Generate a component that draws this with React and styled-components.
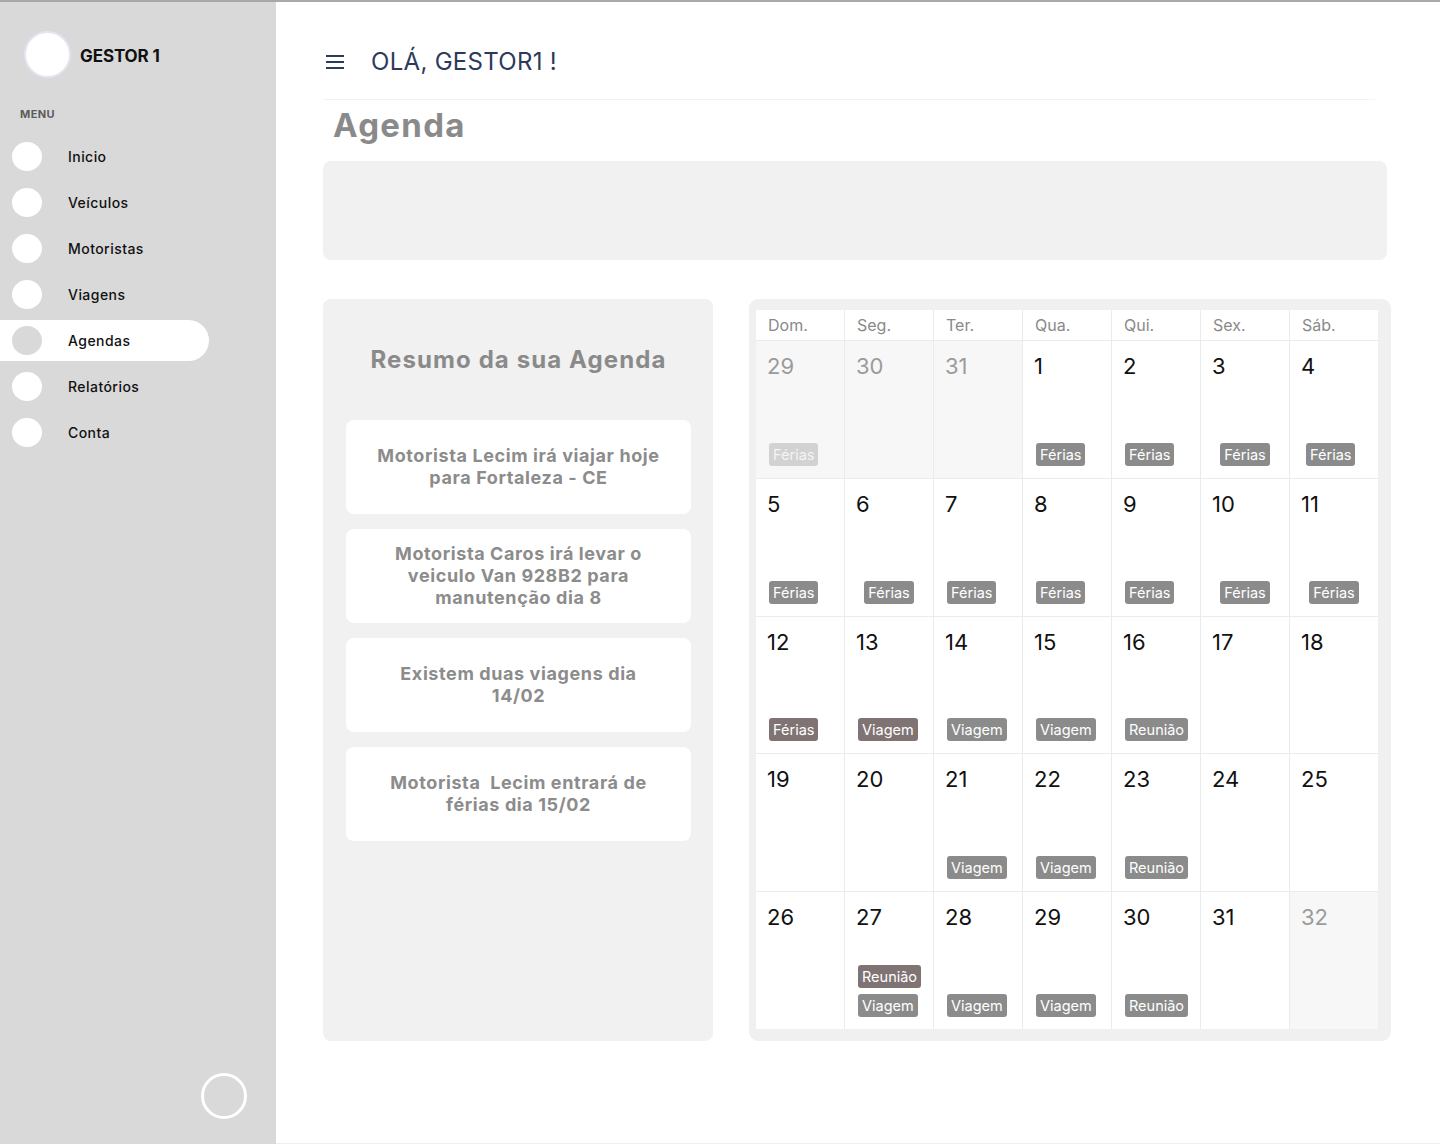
import React from "react";
import styled, { createGlobalStyle } from "styled-components";

const Global = createGlobalStyle`
  html, body { margin: 0; padding: 0; background: #ffffff; }
  body { font-family: "Inter", "Liberation Sans", sans-serif; }
  * { box-sizing: border-box; }
`;

const Page = styled.div`
  display: flex;
  width: 1440px;
  height: 1144px;
  border-top: 2px solid #a9a9a9;
  overflow: hidden;
`;

/* ---------- Sidebar ---------- */
const Sidebar = styled.aside`
  width: 276px;
  flex-shrink: 0;
  background: #d9d9d9;
  display: flex;
  flex-direction: column;
  padding-bottom: 25px;
`;

const Profile = styled.div`
  display: flex;
  align-items: center;
  gap: 9px;
  margin: 29px 0 0 24px;
`;

const Avatar = styled.div`
  width: 47px;
  height: 47px;
  border-radius: 50%;
  background: #ffffff;
  border: 2px solid #e6e4f3;
`;

const ProfileName = styled.span`
  padding-top: 3px;
  font-family: "Inter", sans-serif;
  font-weight: 700;
  font-size: 17px;
  color: #111111;
  letter-spacing: -0.1px;
`;

const MenuLabel = styled.div`
  margin: 29px 0 0 20px;
  font-size: 11px;
  line-height: 14px;
  font-weight: 700;
  color: #5c5c5c;
  letter-spacing: 0.4px;
`;

const Nav = styled.nav`
  display: flex;
  flex-direction: column;
  gap: 5px;
  margin-top: 15px;
`;

const NavItem = styled.div`
  width: 209px;
  height: 41px;
  display: flex;
  align-items: center;
  gap: 26px;
  padding-left: 12px;
  border-radius: 0 21px 21px 0;
  background: ${(p) => (p.$active ? "#ffffff" : "transparent")};
`;

const NavDot = styled.span`
  width: 30px;
  height: 29px;
  border-radius: 50%;
  background: ${(p) => (p.$active ? "#d9d9d9" : "#ffffff")};
`;

const NavText = styled.span`
  font-size: 14px;
  font-weight: 500;
  color: #111111;
  letter-spacing: 0.45px;
`;

const Ring = styled.div`
  margin-top: auto;
  align-self: flex-end;
  margin-right: 29px;
  width: 46px;
  height: 46px;
  border-radius: 50%;
  border: 3px solid #ffffff;
`;

/* ---------- Main ---------- */
const Main = styled.main`
  flex: 1;
  padding: 0 53px 0 47px;
  border-bottom: 1px solid #efefef;
`;

const Header = styled.header`
  width: 1052px;
  height: 98px;
  padding: 22px 0 0 3px;
  display: flex;
  align-items: center;
  gap: 27px;
  border-bottom: 1px solid #f3f3f3;
`;

const Greeting = styled.h1`
  margin: 0;
  font-family: "Inter", sans-serif;
  font-weight: 400;
  font-size: 24px;
  letter-spacing: 0.3px;
  color: #2c3a5b;
`;

const Title = styled.h2`
  margin: 5px 0 0 10px;
  font-size: 33px;
  line-height: 40px;
  font-weight: 700;
  color: #8a8a8a;
  letter-spacing: 1.3px;
`;

const Banner = styled.div`
  margin-top: 16px;
  width: 1064px;
  height: 99px;
  border-radius: 8px;
  background: #f1f1f1;
`;

const Panels = styled.div`
  display: flex;
  gap: 36px;
  margin-top: 39px;
`;

const SummaryPanel = styled.section`
  width: 390px;
  height: 742px;
  border-radius: 8px;
  background: #f1f1f1;
  padding: 47px 22px 0 23px;
  display: flex;
  flex-direction: column;
  gap: 15px;
`;

const SummaryTitle = styled.h3`
  margin: 0 0 31px;
  text-align: center;
  font-size: 24px;
  line-height: 28px;
  font-weight: 700;
  color: #8a8a8a;
  letter-spacing: 1.1px;
`;

const SummaryCard = styled.div`
  height: 94px;
  border-radius: 8px;
  background: #ffffff;
  display: flex;
  align-items: center;
  justify-content: center;
  padding: 0 8px;
  text-align: center;
  white-space: pre-wrap;
  font-size: 18px;
  line-height: 22px;
  font-weight: 700;
  color: #8c8c8c;
  letter-spacing: 0.6px;
`;

const CalendarPanel = styled.section`
  width: 642px;
  height: 742px;
  border-radius: 9px;
  background: #f0f0f0;
  padding: 11px 13px 12px 7px;
`;

const Grid = styled.div`
  height: 100%;
  display: grid;
  grid-template-columns: repeat(7, 1fr);
  grid-template-rows: 30px repeat(5, 1fr);
  gap: 1px;
  background: #ebebeb;
`;

const WeekDay = styled.div`
  background: #ffffff;
  display: flex;
  align-items: center;
  padding-left: 12px;
  font-size: 16px;
  color: #8a8a8a;
`;

const Cell = styled.div`
  background: ${(p) => (p.$muted ? "#f7f7f7" : "#ffffff")};
  display: flex;
  flex-direction: column;
  padding: 12px 0 12px;
`;

const DayNum = styled.span`
  padding-left: 11px;
  font-size: 22px;
  line-height: 26px;
  color: ${(p) => (p.$muted ? "#9b9b9b" : "#111111")};
`;

const Tags = styled.div`
  margin-top: auto;
  display: flex;
  flex-direction: column;
  gap: 6px;
  align-items: ${(p) => (p.$center ? "center" : "flex-start")};
  padding-left: ${(p) => (p.$center ? 0 : p.$indent)}px;
`;

const tagColors = {
  normal: "#8b8b8b",
  dark: "#807373",
  muted: "#d2d2d2",
};

const Tag = styled.span`
  height: 23px;
  line-height: 23px;
  padding: 0 4px;
  border-radius: 3px;
  font-size: 14.5px;
  color: ${(p) => (p.$tone === "muted" ? "#f4f4f4" : "#ffffff")};
  background: ${(p) => tagColors[p.$tone]};
`;

const Hamburger = () => (
  <svg width="18" height="14" viewBox="0 0 18 14" fill="none">
    <path d="M0 1H18M0 7H18M0 13H18" stroke="#2c3a5b" strokeWidth="2" />
  </svg>
);

const menu = ["Inicio", "Veículos", "Motoristas", "Viagens", "Agendas", "Relatórios", "Conta"];

const summary = [
  "Motorista Lecim irá viajar hoje\npara Fortaleza - CE",
  "Motorista Caros irá levar o\nveiculo Van 928B2 para\nmanutenção dia 8",
  "Existem duas viagens dia\n14/02",
  "Motorista  Lecim entrará de\nférias dia 15/02",
];

const weekDays = ["Dom.", "Seg.", "Ter.", "Qua.", "Qui.", "Sex.", "Sáb."];

const F = { t: "Férias", tone: "normal" };
const V = { t: "Viagem", tone: "normal" };
const R = { t: "Reunião", tone: "normal" };

const weeks = [
  [
    { d: 29, muted: true, tags: [{ t: "Férias", tone: "muted" }] },
    { d: 30, muted: true },
    { d: 31, muted: true },
    { d: 1, tags: [F] },
    { d: 2, tags: [F] },
    { d: 3, tags: [F], center: true },
    { d: 4, tags: [F], indent: 16 },
  ],
  [
    { d: 5, tags: [F] },
    { d: 6, tags: [F], center: true },
    { d: 7, tags: [F] },
    { d: 8, tags: [F] },
    { d: 9, tags: [F] },
    { d: 10, tags: [F], center: true },
    { d: 11, tags: [F], center: true },
  ],
  [
    { d: 12, tags: [{ t: "Férias", tone: "dark" }] },
    { d: 13, tags: [{ t: "Viagem", tone: "dark" }] },
    { d: 14, tags: [V] },
    { d: 15, tags: [V] },
    { d: 16, tags: [R] },
    { d: 17 },
    { d: 18 },
  ],
  [
    { d: 19 },
    { d: 20 },
    { d: 21, tags: [V] },
    { d: 22, tags: [V] },
    { d: 23, tags: [R] },
    { d: 24 },
    { d: 25 },
  ],
  [
    { d: 26 },
    { d: 27, tags: [{ t: "Reunião", tone: "dark" }, V] },
    { d: 28, tags: [V] },
    { d: 29, tags: [V] },
    { d: 30, tags: [R] },
    { d: 31 },
    { d: 32, muted: true },
  ],
];

export default function App() {
  return (
    <>
      <Global />
      <Page>
        <Sidebar>
          <Profile>
            <Avatar />
            <ProfileName>GESTOR 1</ProfileName>
          </Profile>
          <MenuLabel>MENU</MenuLabel>
          <Nav>
            {menu.map((m) => (
              <NavItem key={m} $active={m === "Agendas"}>
                <NavDot $active={m === "Agendas"} />
                <NavText>{m}</NavText>
              </NavItem>
            ))}
          </Nav>
          <Ring />
        </Sidebar>

        <Main>
          <Header>
            <Hamburger />
            <Greeting>OLÁ, GESTOR1 !</Greeting>
          </Header>
          <Title>Agenda</Title>
          <Banner />
          <Panels>
            <SummaryPanel>
              <SummaryTitle>Resumo da sua Agenda</SummaryTitle>
              {summary.map((s) => (
                <SummaryCard key={s}>{s}</SummaryCard>
              ))}
            </SummaryPanel>
            <CalendarPanel>
              <Grid>
                {weekDays.map((w) => (
                  <WeekDay key={w}>{w}</WeekDay>
                ))}
                {weeks.flat().map((c, i) => (
                  <Cell key={i} $muted={c.muted}>
                    <DayNum $muted={c.muted}>{c.d}</DayNum>
                    {c.tags && (
                      <Tags $center={c.center} $indent={c.indent ?? 13}>
                        {c.tags.map((t, j) => (
                          <Tag key={j} $tone={t.tone}>
                            {t.t}
                          </Tag>
                        ))}
                      </Tags>
                    )}
                  </Cell>
                ))}
              </Grid>
            </CalendarPanel>
          </Panels>
        </Main>
      </Page>
    </>
  );
}
